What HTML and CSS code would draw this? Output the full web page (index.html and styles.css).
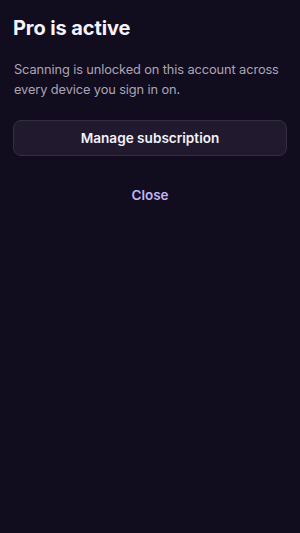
FILE: index.html
```html
<!DOCTYPE html>
<html lang="en">
<head>
    <meta charset="UTF-8">
    <meta name="viewport" content="width=device-width, initial-scale=1.0">
    <title>Pro is active</title>
    <link rel="stylesheet" href="styles.css">
</head>
<body>
    <div class="sheet">
        <h1 class="sheet-title">Pro is active</h1>
        <p class="sheet-text">Scanning is unlocked on this account across every device you sign in on.</p>
        <button class="manage-btn">Manage subscription</button>
        <button class="close-btn">Close</button>
    </div>
</body>
</html>
```

FILE: styles.css
```css
* {
    margin: 0;
    padding: 0;
    box-sizing: border-box;
}

html, body {
    height: 100%;
}

body {
    background-color: #120c1f;
    color: #fff;
    font-family: Inter, 'Noto Sans', sans-serif;
}

.sheet {
    display: flex;
    flex-direction: column;
    padding: 16px 13px;
}

.sheet-title {
    font-size: 20px;
    font-weight: 700;
    line-height: 24px;
    color: #f6f3fb;
    letter-spacing: -0.1px;
}

.sheet-text {
    margin-top: 20px;
    padding-left: 1px;
    font-size: 12.8px;
    line-height: 20px;
    letter-spacing: -0.1px;
    color: #aba6b5;
}

.manage-btn {
    margin-top: 20px;
    height: 36px;
    border: 1px solid #352e43;
    border-radius: 8px;
    background: #211a2e;
    color: #f4f1f8;
    font-family: inherit;
    font-size: 13.6px;
    font-weight: 600;
    cursor: pointer;
}

.close-btn {
    margin-top: 29px;
    align-self: center;
    background: transparent;
    border: none;
    color: #c2b5f5;
    font-family: inherit;
    font-size: 13.5px;
    font-weight: 600;
    line-height: 20px;
    cursor: pointer;
}
```
